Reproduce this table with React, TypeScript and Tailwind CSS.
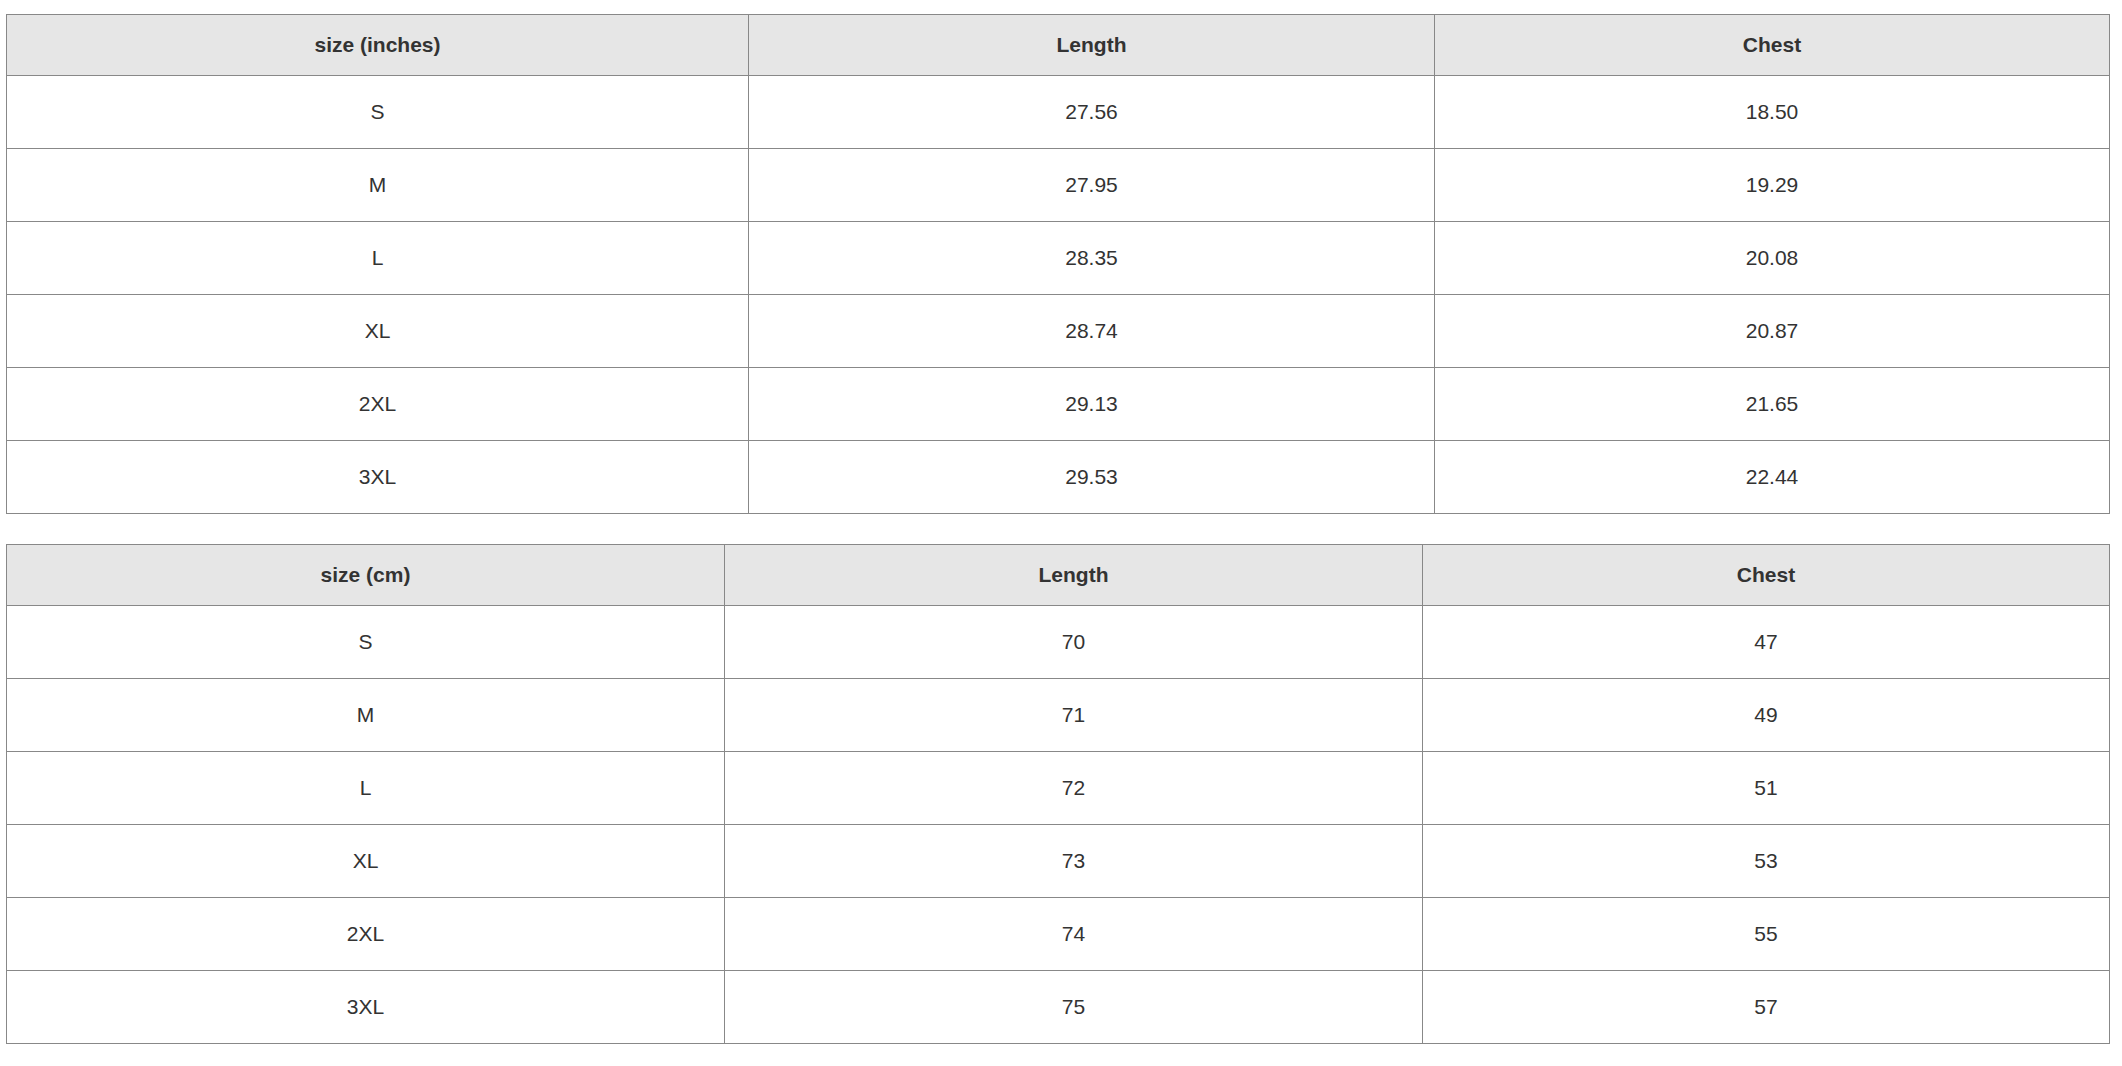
import React from 'react'

type Table = {
  label: string
  widths: [string, string, string]
  rows: [string, string, string][]
}

const tables: Table[] = [
  {
    label: 'size (inches)',
    widths: ['w-[742px]', 'w-[686px]', 'w-[675px]'],
    rows: [
      ['S', '27.56', '18.50'],
      ['M', '27.95', '19.29'],
      ['L', '28.35', '20.08'],
      ['XL', '28.74', '20.87'],
      ['2XL', '29.13', '21.65'],
      ['3XL', '29.53', '22.44'],
    ],
  },
  {
    label: 'size (cm)',
    widths: ['w-[718px]', 'w-[698px]', 'w-[687px]'],
    rows: [
      ['S', '70', '47'],
      ['M', '71', '49'],
      ['L', '72', '51'],
      ['XL', '73', '53'],
      ['2XL', '74', '55'],
      ['3XL', '75', '57'],
    ],
  },
]

function SizeTable({ table }: { table: Table }) {
  return (
    <table className="w-[2103px] table-fixed border-collapse border border-[#888888] text-[21px] text-[#333333]">
      <colgroup>
        {table.widths.map((w, i) => (
          <col key={i} className={w} />
        ))}
      </colgroup>
      <thead>
        <tr className="bg-[#e6e6e6]">
          {[table.label, 'Length', 'Chest'].map((h) => (
            <th key={h} className="h-[61px] border border-[#888888] text-center font-bold">
              {h}
            </th>
          ))}
        </tr>
      </thead>
      <tbody>
        {table.rows.map((row) => (
          <tr key={row[0]}>
            {row.map((cell, i) => (
              <td key={i} className="h-[73px] border border-[#888888] text-center">
                {cell}
              </td>
            ))}
          </tr>
        ))}
      </tbody>
    </table>
  )
}

export default function App() {
  return (
    <div className="flex flex-col gap-[30px] px-[6px] pt-[14px] bg-white min-h-screen font-['Liberation_Sans',Arial,sans-serif]">
      {tables.map((t) => (
        <SizeTable key={t.label} table={t} />
      ))}
    </div>
  )
}
